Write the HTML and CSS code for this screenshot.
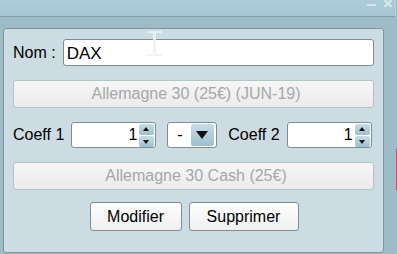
FILE: index.html
```html
<!DOCTYPE html>
<html lang="fr">
<head>
  <meta charset="UTF-8" />
  <title>Sous-jacent</title>
  <link rel="stylesheet" href="styles.css">
</head>
<body>
  <div class="titlebar">
    <svg class="win-btn" width="9" height="7" viewBox="0 0 9 7">
      <rect x="0" y="4" width="9" height="2" fill="#dce6ea" />
    </svg>
    <svg class="win-btn" width="8" height="7" viewBox="0 0 8 7">
      <path d="M0.5 0 L7.5 7 M7.5 0 L0.5 7" stroke="#dce6ea" stroke-width="2" />
    </svg>
  </div>

  <div class="window">
    <div class="panel">
      <div class="row">
        <label class="label">Nom :</label>
        <div class="field name-field">DAX</div>
      </div>

      <button class="wide-btn" disabled>Allemagne 30 (25€) (JUN-19)</button>

      <div class="row coeffs">
        <label class="label">Coeff 1</label>
        <div class="field spin">
          <span class="spin-value">1</span>
          <span class="spin-btns">
            <span class="spin-btn up"></span>
            <span class="spin-btn down"></span>
          </span>
        </div>
        <div class="field combo">
          <span class="combo-value">-</span>
          <span class="combo-btn"></span>
        </div>
        <label class="label">Coeff 2</label>
        <div class="field spin">
          <span class="spin-value">1</span>
          <span class="spin-btns">
            <span class="spin-btn up"></span>
            <span class="spin-btn down"></span>
          </span>
        </div>
      </div>

      <button class="wide-btn cash" disabled>Allemagne 30 Cash (25€)</button>

      <div class="actions">
        <button class="btn modify">Modifier</button>
        <button class="btn delete">Supprimer</button>
      </div>
    </div>
    <div class="side-strip"></div>
  </div>

  <svg class="ibeam" width="15" height="25" viewBox="0 0 15 25">
    <rect x="0" y="0" width="15" height="2" fill="#eef2f3" />
    <rect x="6" y="2" width="3" height="21" fill="#eef2f3" />
    <rect x="0" y="23" width="15" height="2" fill="#eef2f3" />
  </svg>
</body>
</html>
```

FILE: styles.css
```css
body {
  margin: 0;
  width: 397px;
  height: 254px;
  overflow: hidden;
  background-color: #9ebbc8;
  font-family: "Liberation Sans", Arial, sans-serif;
  font-size: 16px;
  color: #000;
  position: relative;
}

.titlebar {
  height: 16px;
  width: 392px;
  border-bottom: 1px solid #7f9caa;
  border-right: 1px solid #b9d2dc;
  background: linear-gradient(#aecdda, #a6c4d2);
  display: flex;
  justify-content: flex-end;
  align-items: flex-start;
  gap: 8px;
  padding-right: 3px;
  box-sizing: content-box;
}

.win-btn {
  display: block;
}

.window {
  display: flex;
  margin-top: 11px;
}

.panel {
  margin-left: 3px;
  width: 378px;
  height: 213px;
  padding: 10px 9px 0;
  box-sizing: content-box;
  background-color: #cddbe2;
  border: 1px solid #7b95a2;
  border-radius: 3px;
  display: flex;
  flex-direction: column;
}

.side-strip {
  margin-left: 12px;
  width: 1px;
  height: 40px;
  margin-top: 121px;
  background-color: #d64a5a;
  border-top: 1px solid #a040d0;
}

.row {
  display: flex;
  align-items: center;
  height: 27px;
}

.label {
  flex: none;
}

.field {
  background-color: #fff;
  border: 1px solid #7d8e98;
  border-radius: 3px;
  box-sizing: border-box;
}

.name-field {
  margin-left: 7px;
  flex: 1;
  height: 27px;
  padding: 4px 0 0 3px;
  font-size: 17px;
}

.wide-btn {
  margin-top: 14px;
  height: 28px;
  font-family: inherit;
  font-size: 16px;
  color: #a4a8aa;
  background: linear-gradient(#f6f6f6, #ebebeb);
  border: 1px solid #b4c2c9;
  border-radius: 3px;
  padding: 0;
  padding-left: 5px;
}

.coeffs {
  margin-top: 14px;
  height: 26px;
}

.spin {
  height: 26px;
  width: 85px;
  margin-left: 7px;
  display: flex;
  align-items: center;
  justify-content: flex-end;
  padding-right: 1px;
}

.spin-value {
  padding-right: 2px;
}

.spin-btns {
  display: flex;
  flex-direction: column;
  gap: 1px;
  width: 15px;
}

.spin-btn {
  height: 11px;
  background: linear-gradient(#c6dde6, #9fbfcd);
  border-radius: 2px;
  position: relative;
}

.spin-btn::after {
  content: "";
  position: absolute;
  left: 4px;
  border-left: 3.5px solid transparent;
  border-right: 3.5px solid transparent;
}

.spin-btn.up::after {
  top: 3px;
  border-bottom: 4px solid #111;
}

.spin-btn.down::after {
  top: 4px;
  border-top: 4px solid #111;
}

.combo {
  height: 26px;
  width: 50px;
  margin-left: 11px;
  margin-right: 11px;
  display: flex;
  align-items: center;
  justify-content: space-between;
  padding: 0 2px 0 9px;
}

.combo-btn {
  width: 23px;
  height: 22px;
  background: linear-gradient(#c8dee7, #9dbdcb);
  border-radius: 2px;
  position: relative;
}

.combo-btn::after {
  content: "";
  position: absolute;
  left: 5px;
  top: 7px;
  border-left: 6.5px solid transparent;
  border-right: 6.5px solid transparent;
  border-top: 8px solid #111;
}

.cash {
  margin-top: 14px;
}

.actions {
  margin-top: 12px;
  display: flex;
  justify-content: center;
  gap: 7px;
  padding-left: 1px;
}

.btn {
  height: 29px;
  font-family: inherit;
  font-size: 16px;
  color: #000;
  background: linear-gradient(#fdfdfd, #f0f0f0);
  border: 1px solid #7d8e98;
  border-radius: 3px;
  padding: 0;
}

.btn.modify {
  width: 92px;
}

.btn.delete {
  width: 110px;
}

.ibeam {
  position: absolute;
  left: 147px;
  top: 31px;
  opacity: 0.85;
}
```
